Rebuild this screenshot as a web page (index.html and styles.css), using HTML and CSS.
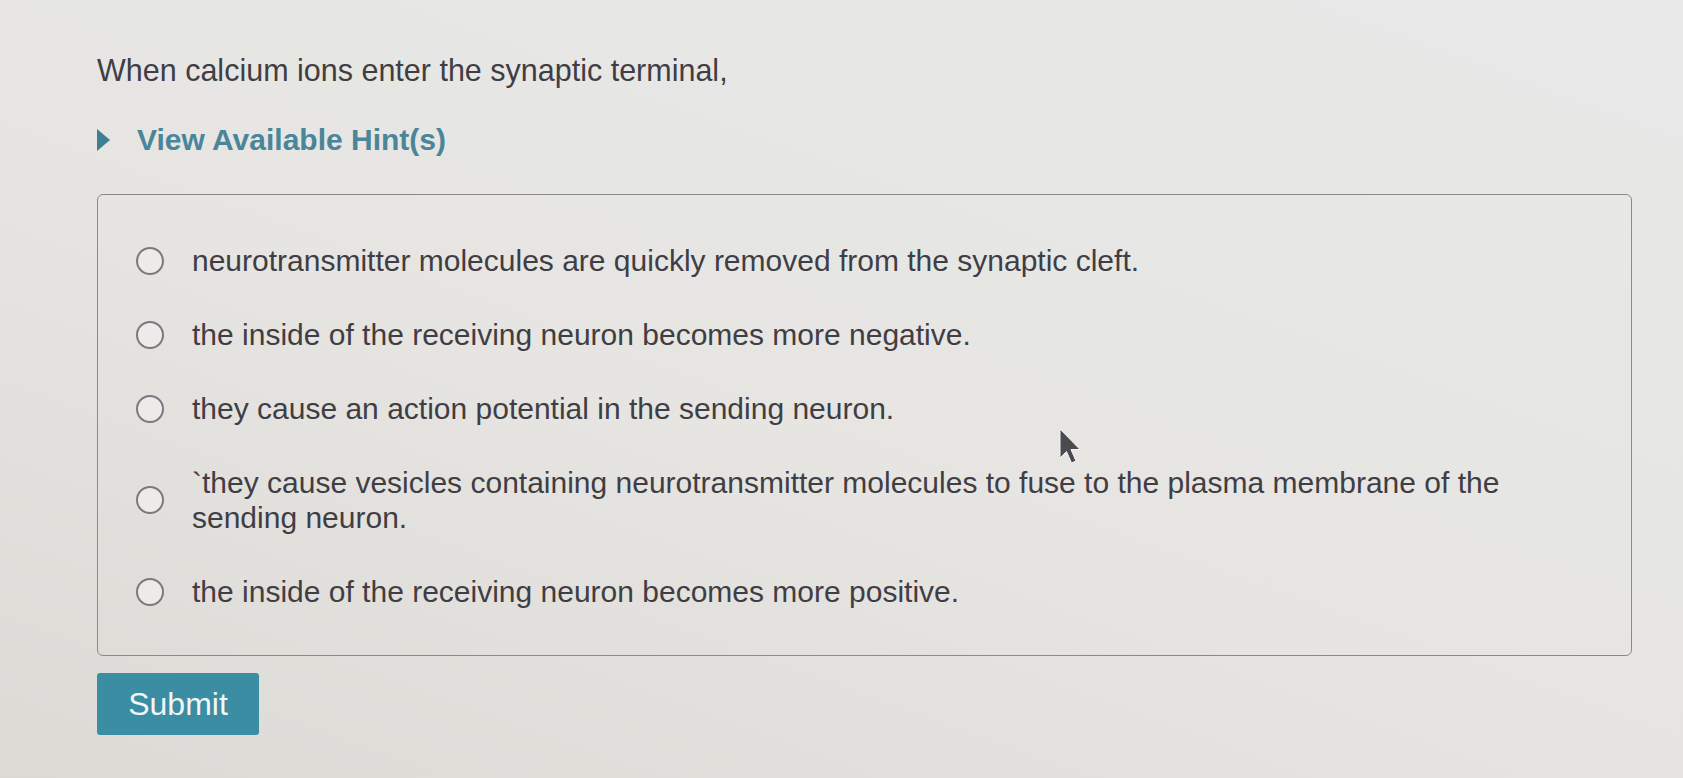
FILE: index.html
```html
<!DOCTYPE html>
<html lang="en">
<head>
<meta charset="utf-8">
<title>Question</title>
<link rel="stylesheet" href="styles.css">
</head>
<body>
<main class="page">
  <p class="question">When calcium ions enter the synaptic terminal,</p>
  <div class="hint">
    <svg class="hint-arrow" width="13" height="22" viewBox="0 0 13 22"><path d="M0 0 L13 11 L0 22 Z"/></svg>
    <span class="hint-text">View Available Hint(s)</span>
  </div>
  <form class="choices">
    <label class="choice"><input type="radio" name="a" class="radio"><span class="label-text">neurotransmitter molecules are quickly removed from the synaptic cleft.</span></label>
    <label class="choice"><input type="radio" name="a" class="radio"><span class="label-text">the inside of the receiving neuron becomes more negative.</span></label>
    <label class="choice"><input type="radio" name="a" class="radio"><span class="label-text">they cause an action potential in the sending neuron.</span></label>
    <label class="choice"><input type="radio" name="a" class="radio"><span class="label-text">`they cause vesicles containing neurotransmitter molecules to fuse to the plasma membrane of the sending neuron.</span></label>
    <label class="choice"><input type="radio" name="a" class="radio"><span class="label-text">the inside of the receiving neuron becomes more positive.</span></label>
  </form>
  <button class="submit" type="button">Submit</button>
</main>
<svg class="cursor" width="22" height="38" viewBox="0 0 22 38"><path d="M1 1 L1 30 L7.5 23.5 L12.5 35 L17 33 L12 21.5 L21 21.5 Z"/></svg>
</body>
</html>
```
FILE: styles.css
```css
html, body {
  margin: 0;
  padding: 0;
}
body {
  background: linear-gradient(200deg, #e8e9e8 0%, #e6e5e2 55%, #dcdad5 100%);
  font-family: "Liberation Sans", Arial, Helvetica, sans-serif;
  color: #403e44;
  min-height: 778px;
  position: relative;
  overflow: hidden;
}
.page {
  padding: 53px 0 0 97px;
  width: 1535px;
}
.question {
  margin: 0;
  font-size: 30.5px;
  line-height: 35px;
}
.hint {
  margin-top: 34px;
  display: flex;
  align-items: center;
  gap: 27px;
  height: 36px;
}
.hint-arrow {
  fill: #3f7f95;
  flex: none;
}
.hint-text {
  font-size: 30px;
  font-weight: bold;
  color: #4a8599;
  line-height: 36px;
}
.choices {
  margin-top: 36px;
  border: 1.5px solid #8a8a8d;
  border-radius: 6px;
  padding: 48px 70px 46px 38px;
  display: flex;
  flex-direction: column;
  gap: 39px;
}
.choice {
  display: flex;
  align-items: center;
  gap: 28px;
  font-size: 30px;
  line-height: 35px;
}
.radio {
  appearance: none;
  -webkit-appearance: none;
  margin: 0;
  flex: none;
  width: 28px;
  height: 28px;
  border-radius: 50%;
  border: 2px solid #7a7a7e;
  background: #ecebe9;
  box-sizing: border-box;
}
.label-text {
  flex: 1;
}
.submit {
  margin-top: 17px;
  width: 162px;
  height: 62px;
  border: none;
  border-radius: 3px;
  background: #3a8da3;
  color: #f2f6f7;
  font-family: "Liberation Sans", Arial, Helvetica, sans-serif;
  font-size: 32px;
  padding: 0;
}
.cursor {
  position: absolute;
  left: 1059px;
  top: 428px;
}
.cursor path {
  fill: #4a4a4f;
  stroke: #f4f4f4;
  stroke-width: 1;
}
```
